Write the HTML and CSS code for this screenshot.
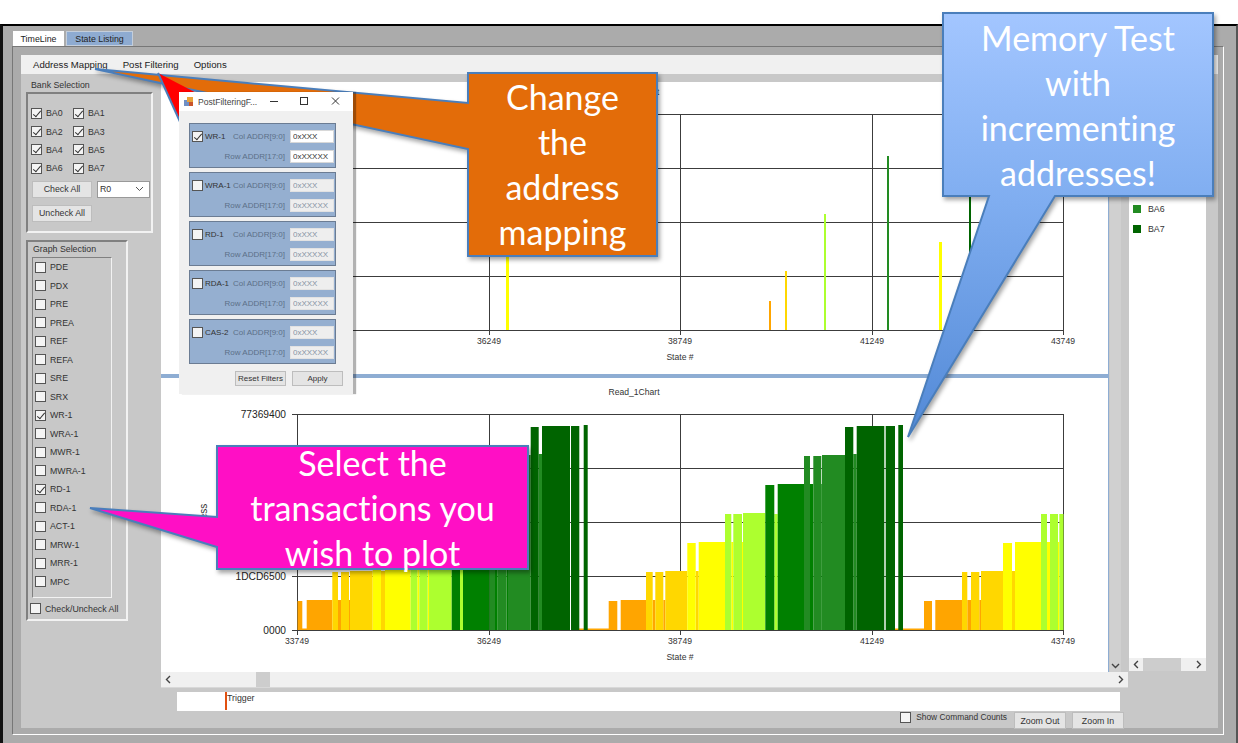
FILE: index.html
```html
<!DOCTYPE html>
<html lang="en">
<head>
  <meta charset="UTF-8">
  <title>State Listing</title>
  <link rel="stylesheet" href="styles.css">
</head>
<body>
  <div class="window">
    <div class="tabs">
      <div class="tab">TimeLine</div>
      <div class="tab tab-active">State Listing</div>
    </div>
    <div class="tab-page">
      <div class="tab-body">
        <div class="menu">
          <span class="menu-item">Address Mapping</span>
          <span class="menu-item">Post Filtering</span>
          <span class="menu-item">Options</span>
        </div>
        <div class="workspace">

          <div class="left-panel">
            <div class="group-title">Bank Selection</div>
            <div class="group bank-group">
              <div class="bank-grid">
                <label class="check"><input type="checkbox" checked>BA0</label>
                <label class="check"><input type="checkbox" checked>BA1</label>
                <label class="check"><input type="checkbox" checked>BA2</label>
                <label class="check"><input type="checkbox" checked>BA3</label>
                <label class="check"><input type="checkbox" checked>BA4</label>
                <label class="check"><input type="checkbox" checked>BA5</label>
                <label class="check"><input type="checkbox" checked>BA6</label>
                <label class="check"><input type="checkbox" checked>BA7</label>
              </div>
              <div class="bank-actions">
                <button class="btn btn-bank">Check All</button>
                <div class="combo">R0
                  <svg width="9" height="6" viewBox="0 0 9 6"><path d="M1 1l3.5 3.5L8 1" fill="none" stroke="#555"/></svg>
                </div>
              </div>
              <button class="btn btn-bank">Uncheck All</button>
            </div>

            <div class="group graph-group">
              <div class="graph-title">Graph Selection</div>
              <div class="graph-list">
                <label class="check"><input type="checkbox">PDE</label>
                <label class="check"><input type="checkbox">PDX</label>
                <label class="check"><input type="checkbox">PRE</label>
                <label class="check"><input type="checkbox">PREA</label>
                <label class="check"><input type="checkbox">REF</label>
                <label class="check"><input type="checkbox">REFA</label>
                <label class="check"><input type="checkbox">SRE</label>
                <label class="check"><input type="checkbox">SRX</label>
                <label class="check"><input type="checkbox" checked>WR-1</label>
                <label class="check"><input type="checkbox">WRA-1</label>
                <label class="check"><input type="checkbox">MWR-1</label>
                <label class="check"><input type="checkbox">MWRA-1</label>
                <label class="check"><input type="checkbox" checked>RD-1</label>
                <label class="check"><input type="checkbox">RDA-1</label>
                <label class="check"><input type="checkbox">ACT-1</label>
                <label class="check"><input type="checkbox">MRW-1</label>
                <label class="check"><input type="checkbox">MRR-1</label>
                <label class="check"><input type="checkbox">MPC</label>
              </div>
              <label class="check check-all"><input type="checkbox">Check/Uncheck All</label>
            </div>
          </div>

          <div class="main-col">
            <div class="views">
              <div class="chart-panel">
                <!-- write chart, viewBox is in page coordinates -->
                <svg class="chart" width="947" height="292" viewBox="161 82 947 292">
                  <text class="chart-title" x="634" y="95">Write_1Chart</text>
                  <path class="grid" d="M297 114.5H1063.5M297 168.5H1063.5M297 222.5H1063.5M297 276.5H1063.5M292 330.5H1063.5M489.5 114V335M680.5 114V335M872.5 114V335M1063.5 114V335"/>
                  <rect class="ba3" x="506" y="257" width="3" height="73"/>
                  <rect class="ba0" x="769" y="301" width="2" height="29"/>
                  <rect class="ba1" x="785" y="271" width="2" height="59"/>
                  <rect class="ba4" x="824" y="214" width="2" height="116"/>
                  <rect class="ba6" x="887" y="156" width="2" height="174"/>
                  <rect class="ba3" x="939" y="242" width="3" height="88"/>
                  <rect class="ba7" x="969" y="190" width="2" height="80"/>
                  <text class="x-label" x="489" y="344">36249</text>
                  <text class="x-label" x="680" y="344">38749</text>
                  <text class="x-label" x="872" y="344">41249</text>
                  <text class="x-label" x="1063" y="344">43749</text>
                  <text class="x-label" x="680" y="360">State #</text>
                </svg>
                <div class="splitter"></div>
                <!-- read chart -->
                <svg class="chart" width="947" height="294" viewBox="161 378 947 294">
                  <text class="chart-title" x="634" y="395">Read_1Chart</text>
                  <text class="y-title" transform="translate(207 522) rotate(-90)">Address</text>
                  <text class="y-label" x="286" y="418">77369400</text>
                  <text class="y-label" x="286" y="580">1DCD6500</text>
                  <text class="y-label" x="286" y="634">0000</text>
                  <path class="grid" d="M292 414.5H1063.5M292 468.5H1063.5M292 522.5H1063.5M292 576.5H1063.5M292 630.5H1063.5M297.5 414V635M489.5 414V635M680.5 414V635M872.5 414V635M1063.5 414V635"/>
                  <path class="ba0" d="M297.5 601H302.3V630H297.5ZM306.7 600H332.3V630H306.7ZM338 600H341V630H338ZM349 600H350V630H349ZM608.7 601H617.3V630H608.7ZM620.7 600H646V630H620.7ZM652.7 600H655.3V630H652.7ZM663.3 600H665.3V630H663.3ZM924 601H932V630H924ZM935.3 600H962V630H935.3ZM967.3 600H971V630H967.3ZM979.3 600H981V630H979.3ZM302 628.5H307V630H302ZM579 628.5H609V630H579ZM895 628.5H924V630H895Z"/>
                  <path class="ba1" d="M332.3 572H338V630H332.3ZM341 572H349V630H341ZM350 571H372.7V630H350ZM381 571H385V630H381ZM646 572H652.7V630H646ZM655.3 572H663.3V630H655.3ZM665.3 571H687.3V630H665.3ZM695.7 571H698.7V630H695.7ZM962 572H967.3V630H962ZM971 572H979.3V630H971ZM981 571H1003V630H981ZM1012 571H1015V630H1012Z"/>
                  <path class="ba3" d="M372.7 543H381V630H372.7ZM385 543H410.7V630H385ZM417.3 543H419.3V630H417.3ZM427.7 543H429V630H427.7ZM687.3 543H695.7V630H687.3ZM698.7 542H725V630H698.7ZM731.3 542H733.3V630H731.3ZM742 542H743V630H742ZM1003 543H1012V630H1003ZM1015 542H1041V630H1015ZM1047 542H1050V630H1047ZM1058 542H1059.3V630H1058Z"/>
                  <path class="ba4" d="M410.7 514H417.3V630H410.7ZM419.3 514H427.7V630H419.3ZM429 514H451.7V630H429ZM460 514H463V630H460ZM725 514H731.3V630H725ZM733.3 514H742V630H733.3ZM743 513H765.3V630H743ZM774.3 514H777.7V630H774.3ZM1041 514H1047V630H1041ZM1050 514H1058V630H1050ZM1059.3 514H1063.5V630H1059.3Z"/>
                  <path class="ba5" d="M451.7 485H460V630H451.7ZM463 484H489.3V630H463ZM495 484H497.7V630H495ZM506.7 484H508V630H506.7ZM765.3 485H774.3V630H765.3ZM777.7 484H804V630H777.7ZM810 484H813.3V630H810ZM821.3 484H822V630H821.3Z"/>
                  <path class="ba6" d="M489.3 456H495V630H489.3ZM497.7 456H506.7V630H497.7ZM508 455H530.7V630H508ZM538.7 454H542V630H538.7ZM804 456H810V630H804ZM813.3 456H821.3V630H813.3ZM822 455H845V630H822ZM853.3 454H856.7V630H853.3Z"/>
                  <path class="ba7" d="M530.7 427H538.7V630H530.7ZM542 426H570V630H542ZM571 426H579.3V630H571ZM583.7 425H587.7V630H583.7ZM845 427H853.3V630H845ZM856.7 426H884.3V630H856.7ZM885.7 426H895V630H885.7ZM898.3 425H903V630H898.3Z"/>
                  <text class="x-label" x="297" y="644">33749</text>
                  <text class="x-label" x="489" y="644">36249</text>
                  <text class="x-label" x="680" y="644">38749</text>
                  <text class="x-label" x="872" y="644">41249</text>
                  <text class="x-label" x="1063" y="644">43749</text>
                  <text class="x-label" x="680" y="660">State #</text>
                </svg>
              </div>
              <div class="vscroll">
                <svg width="9" height="6" viewBox="0 0 9 6"><path d="M1 1l3.5 3.5L8 1" fill="none" stroke="#444" stroke-width="1.4"/></svg>
              </div>
              <div class="legend">
                <div class="legend-item"><span class="swatch ba6-bg"></span>BA6</div>
                <div class="legend-item"><span class="swatch ba7-bg"></span>BA7</div>
                <div class="legend-scroll">
                  <svg width="6" height="9" viewBox="0 0 6 9"><path d="M5 1L1.5 4.5 5 8" fill="none" stroke="#444" stroke-width="1.4"/></svg>
                  <span class="legend-thumb"></span>
                  <svg width="6" height="9" viewBox="0 0 6 9"><path d="M1 1l3.5 3.5L1 8" fill="none" stroke="#444" stroke-width="1.4"/></svg>
                </div>
              </div>
            </div>
            <div class="hscroll">
              <svg width="6" height="9" viewBox="0 0 6 9"><path d="M5 1L1.5 4.5 5 8" fill="none" stroke="#444" stroke-width="1.4"/></svg>
              <span class="hscroll-thumb"></span>
              <svg class="hscroll-end" width="6" height="9" viewBox="0 0 6 9"><path d="M1 1l3.5 3.5L1 8" fill="none" stroke="#444" stroke-width="1.4"/></svg>
            </div>
            <div class="trigger"><span class="trigger-mark"></span>Trigger</div>
            <div class="foot">
              <label class="check"><input type="checkbox">Show Command Counts</label>
              <button class="btn btn-zoom">Zoom Out</button>
              <button class="btn btn-zoom">Zoom In</button>
            </div>
          </div>

        </div>
      </div>
    </div>
  </div>

  <!-- PowerPoint style callouts drawn over the screenshot -->
  <svg class="overlay" width="1238" height="743" viewBox="0 0 1238 743">
    <defs>
      <linearGradient id="blueFill" gradientUnits="userSpaceOnUse" x1="0" y1="13" x2="0" y2="437">
        <stop offset="0" stop-color="#a3c6ff"/>
        <stop offset="0.45" stop-color="#7fadf0"/>
        <stop offset="1" stop-color="#5289d6"/>
      </linearGradient>
    </defs>
    <polygon class="shape shape-orange" points="95,69 468,103 468,73 657,73 657,256 468,256 468,149"/>
    <polygon class="shape-red" points="158,73 210,100 210,186"/>
    <path class="red-edge" d="M158 73L181 124"/>
    <polygon class="shape shape-pink" points="90,508 217,517 217,446 528,446 528,569 217,569 217,547"/>
    <polygon class="shape shape-blue" points="943,13 1213,13 1213,196 1055,196 908,437 989,196 943,196"/>
  </svg>
  <div class="callout callout-orange">Change<br>the<br>address<br>mapping</div>
  <div class="callout callout-pink">Select the<br>transactions you<br>wish to plot</div>
  <div class="callout callout-blue">Memory Test<br>with<br>incrementing<br>addresses!</div>

  <div class="popup">
    <div class="popup-bar">
      <svg class="popup-icon" width="10" height="10" viewBox="0 0 10 10">
        <rect x="0" y="3" width="5" height="6" fill="#6f8fc4"/>
        <rect x="3" y="0" width="6" height="5" fill="#e8a33a"/>
        <rect x="5" y="5" width="4" height="4" fill="#c9542c"/>
      </svg>
      <span class="popup-name">PostFilteringF...</span>
      <svg class="popup-ctl" width="68" height="10" viewBox="0 0 68 10">
        <path d="M0 5.5H8" stroke="#333" fill="none"/>
        <rect x="30.5" y="1.5" width="7" height="7" stroke="#333" fill="none"/>
        <path d="M62 1.5l7 7M69 1.5l-7 7" stroke="#333" fill="none"/>
      </svg>
    </div>
    <div class="popup-body">
      <div class="filter">
        <div class="filter-row">
          <label class="check filter-name"><input type="checkbox" checked>WR-1</label>
          <span class="filter-label">Col ADDR[9:0]</span>
          <input class="addr" type="text" value="0xXXX">
        </div>
        <div class="filter-row">
          <span class="filter-label">Row ADDR[17:0]</span>
          <input class="addr" type="text" value="0xXXXXX">
        </div>
      </div>
      <div class="filter">
        <div class="filter-row">
          <label class="check filter-name"><input type="checkbox">WRA-1</label>
          <span class="filter-label">Col ADDR[9:0]</span>
          <input class="addr" type="text" value="0xXXX" disabled>
        </div>
        <div class="filter-row">
          <span class="filter-label">Row ADDR[17:0]</span>
          <input class="addr" type="text" value="0xXXXXX" disabled>
        </div>
      </div>
      <div class="filter">
        <div class="filter-row">
          <label class="check filter-name"><input type="checkbox">RD-1</label>
          <span class="filter-label">Col ADDR[9:0]</span>
          <input class="addr" type="text" value="0xXXX" disabled>
        </div>
        <div class="filter-row">
          <span class="filter-label">Row ADDR[17:0]</span>
          <input class="addr" type="text" value="0xXXXXX" disabled>
        </div>
      </div>
      <div class="filter">
        <div class="filter-row">
          <label class="check filter-name"><input type="checkbox">RDA-1</label>
          <span class="filter-label">Col ADDR[9:0]</span>
          <input class="addr" type="text" value="0xXXX" disabled>
        </div>
        <div class="filter-row">
          <span class="filter-label">Row ADDR[17:0]</span>
          <input class="addr" type="text" value="0xXXXXX" disabled>
        </div>
      </div>
      <div class="filter">
        <div class="filter-row">
          <label class="check filter-name"><input type="checkbox">CAS-2</label>
          <span class="filter-label">Col ADDR[9:0]</span>
          <input class="addr" type="text" value="0xXXX" disabled>
        </div>
        <div class="filter-row">
          <span class="filter-label">Row ADDR[17:0]</span>
          <input class="addr" type="text" value="0xXXXXX" disabled>
        </div>
      </div>
      <div class="popup-actions">
        <button class="btn btn-popup">Reset Filters</button>
        <button class="btn btn-popup">Apply</button>
      </div>
    </div>
  </div>
</body>
</html>
```

FILE: styles.css
```css
* {
  box-sizing: border-box;
}
html, body {
  margin: 0;
  height: 100%;
  overflow: hidden;
}
body {
  position: relative;
  background-color: #fff;
  font-family: "Liberation Sans", Arial, sans-serif;
  font-size: 8.8px;
  color: #333;
}

/* window frame */
.window {
  width: 1238px;
  height: 719px;
  margin-top: 24px;
  background-color: #ababab;
  border-top: 2px solid #000;
  border-left: 3px solid #111;
  border-right: 2px solid #555;
}
.tabs {
  display: flex;
  gap: 2px;
  height: 20px;
  padding: 5px 0 0 10px;
}
.tab {
  width: 51px;
  height: 15px;
  padding-top: 3px;
  background-color: #fff;
  text-align: center;
  color: #222;
}
.tab-active {
  width: 67px;
  background-color: #8eabd1;
  border: 1px solid #c4cedb;
  padding-top: 2px;
}
.tab-page {
  width: 1212px;
  height: 689px;
  margin-left: 9px;
  padding: 8px 5px 6px 8px;
  border-top: 1px solid #777;
  border-left: 1px solid #777;
  border-right: 1px solid #fff;
  border-bottom: 1px solid #fff;
}
.tab-body {
  display: flex;
  flex-direction: column;
  height: 100%;
  background-color: #c8c8c8;
}
.menu {
  display: flex;
  flex: none;
  height: 19px;
  padding-left: 12px;
  gap: 15px;
  align-items: center;
  background-color: #f0f0f0;
  font-size: 9.6px;
  color: #222;
}
.workspace {
  display: flex;
  flex: 1;
  min-height: 0;
}

/* left column */
.left-panel {
  flex: none;
  width: 140px;
  padding: 5px 0 0 5px;
}
.group-title {
  height: 13px;
  padding: 1px 0 0 5px;
}
.group {
  border: 2px solid;
  border-color: #808080 #f2f2f2 #f2f2f2 #808080;
}
.bank-group {
  width: 127px;
  height: 141px;
  padding: 10px 0 0 3px;
}
.bank-grid {
  display: grid;
  grid-template-columns: 42px 60px;
  grid-auto-rows: 18.4px;
}
.check {
  display: flex;
  align-items: center;
  gap: 4px;
  white-space: nowrap;
}
.check input {
  appearance: none;
  position: relative;
  flex: none;
  width: 11px;
  height: 11px;
  margin: 0;
  background-color: #f4f4f4;
  border: 1px solid #555;
}
.check input:checked::after {
  content: "";
  position: absolute;
  left: 3px;
  top: 0;
  width: 3px;
  height: 7px;
  border: solid #333;
  border-width: 0 1px 1px 0;
  transform: rotate(40deg);
}
.btn {
  padding: 0;
  background-color: #e4e4e4;
  border: 1px solid #bdbdbd;
  font-family: inherit;
  font-size: 8.8px;
  color: #333;
}
.bank-actions {
  display: flex;
  gap: 5px;
  margin-top: 3px;
}
.btn-bank {
  display: block;
  width: 60px;
  height: 17px;
  margin-left: 1px;
}
.bank-group > .btn-bank {
  margin-top: 7px;
}
.combo {
  display: flex;
  align-items: center;
  justify-content: space-between;
  width: 53px;
  height: 17px;
  padding: 0 5px 0 2px;
  background-color: #fff;
  border: 1px solid #999;
}
.graph-group {
  width: 102px;
  height: 381px;
  margin-top: 7px;
  padding: 2px 0 0 4px;
}
.graph-title {
  height: 13px;
  padding-left: 1px;
}
.graph-list {
  display: grid;
  grid-auto-rows: 18.5px;
  width: 80px;
  height: 341px;
  padding-left: 2px;
  border: 1px solid;
  border-color: #808080 #f2f2f2 #f2f2f2 #808080;
  align-items: center;
}
.check-all {
  margin: 5px 0 0 -2px;
}

/* charts */
.main-col {
  flex: 1;
  min-width: 0;
  padding-top: 8px;
}
.views {
  display: flex;
  height: 590px;
}
.chart-panel {
  flex: none;
  width: 947px;
  background-color: #fff;
}
.chart {
  display: block;
}
.splitter {
  height: 4px;
  background-color: #8eadd3;
}
.grid {
  fill: none;
  stroke: #3c3c3c;
  stroke-width: 1;
}
.chart-title, .x-label {
  font-size: 8.6px;
  fill: #333;
  text-anchor: middle;
}
.y-label {
  font-size: 10.2px;
  fill: #222;
  text-anchor: end;
}
.y-title {
  font-size: 10px;
  fill: #333;
  text-anchor: middle;
}
.ba0 { fill: #ffa500; }
.ba1 { fill: #ffd700; }
.ba3 { fill: #ffff00; }
.ba4 { fill: #adff2f; }
.ba5 { fill: #008000; }
.ba6 { fill: #228b22; }
.ba7 { fill: #006400; }
.ba6-bg { background-color: #228b22; }
.ba7-bg { background-color: #006400; }

.vscroll {
  display: flex;
  flex: none;
  align-items: flex-end;
  justify-content: center;
  width: 14px;
  padding: 0 0 3px 1px;
  border-left: 1px solid #8eadd3;
  border-right: 1px solid #c8c8c8;
  background: linear-gradient(to right, #c8c8c8 1px, #d0d0d0 1px);
}
.legend {
  display: flex;
  flex: none;
  flex-direction: column;
  width: 77px;
  height: 589px;
  margin-left: 7px;
  padding-top: 117px;
  background-color: #fff;
}
.legend-item {
  display: flex;
  align-items: center;
  gap: 7px;
  height: 20px;
  padding-left: 4px;
  color: #333;
}
.swatch {
  width: 8px;
  height: 8px;
}
.legend-scroll {
  display: flex;
  align-items: center;
  justify-content: space-between;
  height: 13px;
  margin-top: auto;
  padding: 0 4px;
  background-color: #f0f0f0;
}
.legend-thumb {
  width: 39px;
  height: 13px;
  margin: 0 15px 0 4px;
  background-color: #cdcdcd;
}
.hscroll {
  display: flex;
  align-items: center;
  width: 967px;
  height: 16px;
  padding: 0 4px;
  background-color: #f0f0f0;
  border-bottom: 1px solid #d8d8d8;
}
.hscroll-thumb {
  width: 14px;
  height: 15px;
  margin-left: 85px;
  background-color: #cdcdcd;
}
.hscroll-end {
  margin-left: auto;
}
.trigger {
  display: flex;
  width: 943px;
  height: 19px;
  margin: 4px 0 0 16px;
  padding: 1px 0 0 48px;
  background-color: #fff;
}
.trigger-mark {
  width: 2px;
  height: 18px;
  margin-top: -1px;
  background-color: #e2500f;
}
.foot {
  display: flex;
  align-items: flex-start;
  justify-content: flex-end;
  width: 963px;
  height: 18px;
  gap: 6px;
}
.foot .check {
  margin-right: 1px;
  height: 12px;
  gap: 5px;
  font-size: 8.4px;
}
.btn-zoom {
  width: 52px;
  height: 17px;
  margin-top: 1px;
}

/* callouts */
.overlay {
  position: absolute;
  left: 0;
  top: 0;
}
.shape {
  stroke: #4a7ebb;
  stroke-width: 2;
  filter: drop-shadow(2px 3px 2px rgba(0, 0, 0, 0.35));
}
.shape-orange { fill: #e36c09; }
.shape-pink { fill: #ff0fc5; }
.shape-blue { fill: url(#blueFill); }
.shape-red { fill: #ff0000; }
.red-edge {
  fill: none;
  stroke: #4a7ebb;
  stroke-width: 2;
}
.callout {
  position: absolute;
  display: flex;
  align-items: center;
  justify-content: center;
  text-align: center;
  font-family: Lato, "Open Sans", sans-serif;
  font-size: 34px;
  font-variant-ligatures: none;
  line-height: 45px;
  color: #fff;
}
.callout-orange {
  left: 468px;
  top: 72px;
  width: 189px;
  height: 183px;
}
.callout-pink {
  left: 217px;
  top: 440px;
  width: 311px;
  height: 135px;
}
.callout-blue {
  left: 943px;
  top: 13px;
  width: 270px;
  height: 183px;
}

/* PostFiltering dialog */
.popup {
  position: absolute;
  left: 179px;
  top: 92px;
  width: 174px;
  height: 302px;
  background-color: #f0f0f0;
  box-shadow: 3px 0 1px rgba(0, 0, 0, 0.3);
}
.popup-bar {
  display: flex;
  align-items: center;
  height: 19px;
  padding-left: 5px;
  background-color: #fff;
  color: #444;
}
.popup-name {
  margin-left: 4px;
  font-size: 8.6px;
}
.popup-ctl {
  position: absolute;
  left: 91px;
  top: 4px;
  overflow: visible;
}
.popup-body {
  padding: 12px 0 0 10px;
}
.filter {
  width: 147px;
  height: 45px;
  margin-bottom: 4px;
  padding: 6px 1px 0 2px;
  background-color: #95afd0;
  border: 1px solid #6b7c93;
}
.filter-row {
  display: flex;
  align-items: center;
  height: 13px;
  margin-bottom: 7px;
  font-size: 8px;
}
.filter-name {
  gap: 2px;
  color: #333;
}
.filter-label {
  margin-left: auto;
  margin-right: 5px;
  white-space: nowrap;
  color: #5c7088;
}
.addr {
  flex: none;
  width: 44px;
  height: 13px;
  padding: 0 2px;
  background-color: #fff;
  border: 1px solid #d8d8d8;
  font-family: inherit;
  font-size: 8px;
  color: #333;
}
.addr:disabled {
  background-color: #eeeeee;
  border-color: #e2e2e2;
  color: #8794a5;
}
.popup-actions {
  display: flex;
  justify-content: flex-end;
  gap: 6px;
  margin-top: 7px;
  padding-right: 10px;
}
.btn-popup {
  width: 51px;
  height: 15px;
  font-size: 8px;
}
```
